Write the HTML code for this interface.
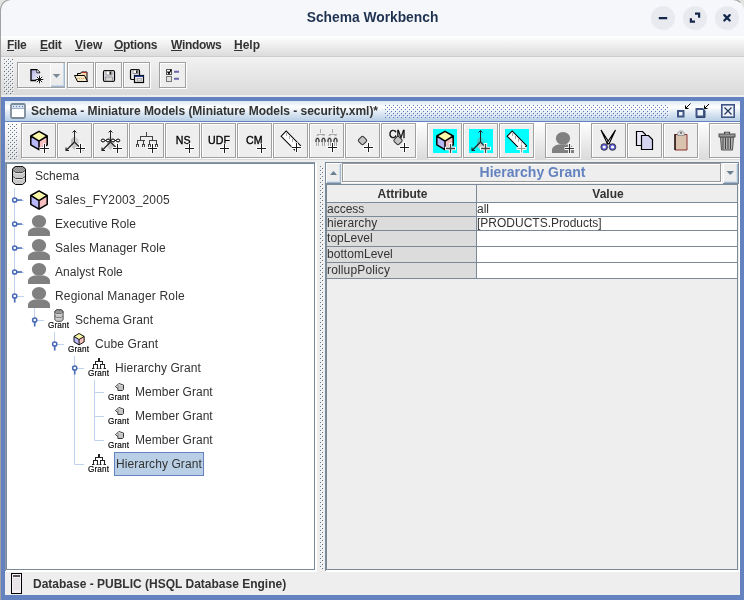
<!DOCTYPE html>
<html>
<head>
<meta charset="utf-8">
<title>Schema Workbench</title>
<style>
html,body{margin:0;padding:0;}
body{width:744px;height:600px;overflow:hidden;background:#e2e2e2;position:relative;font-family:"Liberation Sans",sans-serif;font-size:12px;color:#333;}
.abs{position:absolute;}
svg{display:block;overflow:visible;}
#oswin{position:absolute;left:0;top:0;width:744px;height:600px;background:#eee;will-change:transform;border-radius:11px 11px 0 0;overflow:hidden;}
#osborder{position:absolute;left:0;top:-1px;width:742px;height:620px;border:1px solid #a2a2a2;border-right-color:transparent;border-radius:11px 11px 0 0;pointer-events:none;}
#ostitle{position:absolute;left:0;top:0;width:744px;height:36px;background:#f6f7fb;}
#ostitle .t{position:absolute;left:0;width:745px;top:10px;text-align:center;font-weight:bold;font-size:13.8px;color:#1e3250;line-height:16px;}
.wbtn{position:absolute;top:6px;width:24px;height:24px;border-radius:12px;background:#e8eaf0;}
#topgrad{position:absolute;left:0;top:36px;width:744px;height:21px;background:linear-gradient(#fff,#dadada);}
#menubar{position:absolute;left:0;top:36px;width:744px;height:20px;border-bottom:1px solid #ccc;}
#menubar span{position:absolute;top:1px;font-weight:bold;font-size:12px;line-height:16px;color:#333;letter-spacing:-0.31px;}
#menubar u{text-decoration:underline;text-underline-offset:1px;}
.tbar{background:linear-gradient(#fff,#dadada);}
#tb1{position:absolute;left:1px;top:57px;width:743px;height:38px;background:linear-gradient(#f2f2f2,#dadada);}
.btn{position:absolute;box-sizing:border-box;border:1px solid #a0a0a0;box-shadow:inset 1px 1px 0 #fff, 1px 1px 0 #fff;background:#eee;}
.btn svg{position:absolute;left:-1px;top:-1px;}
#iframe{position:absolute;left:1px;top:97px;width:743px;height:503px;background:#6382bf;}
#ifin{position:absolute;left:4px;top:4px;width:735px;height:494px;background:#eee;overflow:hidden;}
#iftitle{position:absolute;left:0;top:0;width:735px;height:20px;background:linear-gradient(#dde8f3 0%,#fff 30%,#dde8f3 60%,#b8cfe5 100%);border-bottom:1px solid #6382bf;}
#iftitle .t{position:absolute;left:26px;top:2px;font-weight:bold;font-size:12px;line-height:16px;color:#333;white-space:pre;letter-spacing:-0.025px;}
#tb2{position:absolute;left:0;top:21px;width:735px;height:38px;background:linear-gradient(#fff,#dadada);}
#tree{position:absolute;left:1px;top:62px;width:309px;height:407px;background:#fff;border:1px solid #7a8a99;box-sizing:border-box;overflow:hidden;}
.tl{position:absolute;white-space:pre;font-size:12px;letter-spacing:0.2px;line-height:16px;color:#333;}
.gr{position:absolute;white-space:pre;font-size:8.2px;line-height:8px;color:#000;-webkit-text-stroke:0.15px #000;letter-spacing:0.12px;}
#right{position:absolute;left:320px;top:61px;width:414px;height:408px;background:#eee;}
#status{position:absolute;left:0;top:471px;width:735px;height:23px;background:#eee;}
.cell{position:absolute;white-space:pre;font-size:12px;color:#333;}
</style>
</head>
<body>

<svg width="0" height="0" style="position:absolute">
<defs>
<pattern id="bumpG" width="4" height="4" patternUnits="userSpaceOnUse"><rect x="0" y="0" width="1" height="1" fill="#60758e"/><rect x="1" y="1" width="1" height="1" fill="#fff"/><rect x="2" y="2" width="1" height="1" fill="#60758e"/><rect x="3" y="3" width="1" height="1" fill="#fff"/></pattern>
<pattern id="bumpB" width="4" height="4" patternUnits="userSpaceOnUse"><rect x="0" y="0" width="1" height="1" fill="#5878bd"/><rect x="1" y="1" width="1" height="1" fill="#fff"/><rect x="2" y="2" width="1" height="1" fill="#5878bd"/><rect x="3" y="3" width="1" height="1" fill="#fff"/></pattern>
<pattern id="dith" width="2" height="2" patternUnits="userSpaceOnUse"><rect x="0" y="0" width="1" height="1" fill="#888"/><rect x="1" y="1" width="1" height="1" fill="#888"/></pattern>
<linearGradient id="gdoc" x1="0" y1="0" x2="1" y2="1"><stop offset="0" stop-color="#a6a6e0"/><stop offset="1" stop-color="#fff"/></linearGradient>
<g id="plus"><path d="M-5 0h10M0 -5v10" stroke="#fff" stroke-width="3" fill="none"/><path d="M-4.500 0h9M0 -4.500v9" stroke="#1a1a1a" stroke-width="1" fill="none"/></g>
<g id="plusg"><path d="M-5.5 0h11M0 -5.5v11" stroke="#fff" stroke-width="3.4" fill="none"/><path d="M-4.5 0h9M0 -4.5v9" stroke="#444" stroke-width="1.3" fill="none"/></g>
<g id="cube"><path d="M9 0.8L17.2 5.5V14.3L9 19.2L0.8 14.3V5.5Z" fill="#f8f8a8"/><path d="M0.8 5.5L9 10.6V19.2L0.8 14.3Z" fill="#b8b8f8"/><path d="M17.2 5.5L9 10.6V19.2L17.2 14.3Z" fill="#f8c0c0"/><path d="M9 0.8L17.2 5.5V14.3L9 19.2L0.8 14.3V5.5ZM0.8 5.5L9 10.6L17.2 5.5M9 10.6V19.2" fill="none" stroke="#000" stroke-width="1.5" stroke-linejoin="round"/></g>
<g id="dim"><path d="M0 0L-3.500 3.500V8L0 11.500Z" fill="url(#dith)"/><path d="M0 0L4 3.500V8L0 5Z" fill="url(#dith)" opacity="0.600"/><path d="M0 6L4 10L0 14L-3 11Z" fill="#c8c8c8"/><path d="M0 -5.500V6M-2 -3.500L0 -5.500L2 -3.500" fill="none" stroke="#222" stroke-width="1"/><path d="M0 6L-8.500 14.500M-8.500 11.500V14.500H-5.500" fill="none" stroke="#222" stroke-width="1.150"/><path d="M0 6L5.500 11.500" fill="none" stroke="#222" stroke-width="1.150"/></g>
<g id="hier"><path d="M6.5 0V5M1.5 9V5H11.5V9" fill="none" stroke="#333" stroke-width="1"/></g>
<g id="person"><ellipse cx="11" cy="6.400" rx="7.100" ry="6.400" fill="#808080"/><path d="M0 21V18C0 15 3 13.200 6.500 12.400H15.500C19 13.200 22 15 22 18V21Z" fill="#808080"/></g>
<g id="hcoll"><path d="M2 0H7.500" stroke="#4d6fb8" stroke-width="1.700"/><circle cx="0.200" cy="0" r="2.100" fill="#fff" stroke="#4568b4" stroke-width="1.500"/></g>
<g id="hexp"><path d="M0.200 2V6.500" stroke="#4d6fb8" stroke-width="1.700"/><circle cx="0.200" cy="0" r="2.100" fill="#fff" stroke="#4568b4" stroke-width="1.500"/></g>
<g id="db"><path d="M3.5 0.5H10.5L13.5 3V16L10.5 18.5H3.5L0.5 16V3Z" fill="#c8c8c8" stroke="#000" stroke-width="1"/><path d="M3.5 0.5H10.5L13.5 3V4.5L10.5 6.5H3.5L0.5 4.5V3Z" fill="#a8a8a8"/><path d="M3.5 0.5H10.5L13.5 3V4.5L10.5 6.5H3.5L0.5 4.5V3Z" fill="url(#dith)" stroke="#000" stroke-width="0.8"/><path d="M0.5 10.5L3.5 12.5H10.5L13.5 10.5" fill="none" stroke="#000" stroke-width="0.9"/><path d="M1.2 5.5L3.7 7.3H10.3L12.8 5.5M1.2 11.5L3.7 13.3H10.3L12.8 11.5" fill="none" stroke="#f4f4f4" stroke-width="0.8"/></g>
</defs>
</svg>

<div id="oswin">
<div id="ostitle">
<div class="t">Schema Workbench</div>
<div class="wbtn" style="left:651px"><svg width="24" height="24" viewBox="0 0 24 24"><path d="M7.800 12.050h8.400" stroke="#14264a" stroke-width="2.300" fill="none"/></svg></div>
<div class="wbtn" style="left:683px"><svg width="24" height="24" viewBox="0 0 24 24"><path d="M12 7.700H16.100V11.800M7.900 12.200V15.700H12" stroke="#14264a" stroke-width="2.200" fill="none"/></svg></div>
<div class="wbtn" style="left:715px"><svg width="24" height="24" viewBox="0 0 24 24"><path d="M9.300 9.100l5.400 5.400M14.700 9.100l-5.400 5.400" stroke="#14264a" stroke-width="2.200" fill="none" stroke-linecap="round"/></svg></div>
</div>
<div id="topgrad"></div>
<div id="menubar">
<span style="left:7px"><u>F</u>ile</span>
<span style="left:40px"><u>E</u>dit</span>
<span style="left:75px;letter-spacing:0.05px"><u>V</u>iew</span>
<span style="left:114px"><u>O</u>ptions</span>
<span style="left:171px"><u>W</u>indows</span>
<span style="left:234px;letter-spacing:0px"><u>H</u>elp</span>
</div>
<div id="tb1">
<svg class="abs" style="left:3px;top:2px" width="10" height="35"><rect width="10" height="35" fill="url(#bumpG)"/></svg>
<div class="btn" style="left:16px;top:5px;width:48px;height:26px"><div class="abs" style="left:32px;top:0;width:14px;height:24px;background:linear-gradient(#f6f6f6,#e9e9e9);border-left:1px solid #fff;box-shadow:inset -1px -1px 0 #a3b8cc,inset -2px -2px 0 #c9d8e8;"></div>
<svg width="48" height="26" viewBox="0 0 48 26">
<path d="M13.500 7.500H20L23 10.500V18.500H13.500Z" fill="url(#gdoc)"/>
<path d="M19.500 18.500H14V7.600H19.800L23 10.800" fill="none" stroke="#000" stroke-width="1.300"/>
<path d="M19.800 7.600V10.800H23" fill="#fff" stroke="#000" stroke-width="0.800"/>
<circle cx="22.500" cy="17.500" r="3.200" fill="#fff" opacity="0.850"/>
<path d="M22.500 13.700v7.600M18.700 17.500h7.600M19.800 14.800l5.400 5.400M25.200 14.800l-5.400 5.400" stroke="#000" stroke-width="0.900" fill="none"/>
<path d="M35.700 12h7.600l-3.800 4.100z" fill="#7a8a99"/></svg></div>
<div class="btn" style="left:66px;top:5px;width:27px;height:26px"><svg width="27" height="26" viewBox="0 0 27 26">
<path d="M10.5 19.5v-8h3l1-1.5h5.5v9.5z" fill="#f3d9b0" stroke="#000" stroke-width="1"/>
<path d="M15 10.5h5" stroke="#b03030" stroke-width="1"/>
<path d="M7.5 13.5h10l3 6h-10z" fill="#f7e6c4" stroke="#000" stroke-width="1"/>
<path d="M10 16.5h8" stroke="#c9a36a" stroke-width="1" stroke-dasharray="1 1"/></svg></div>
<div class="btn" style="left:94px;top:5px;width:27px;height:26px"><svg width="27" height="26" viewBox="0 0 27 26">
<rect x="8.5" y="8.5" width="11" height="11" rx="1.5" fill="#e6e6ee" stroke="#000" stroke-width="1.2"/>
<rect x="11" y="9" width="6" height="4" fill="#fff" stroke="#555" stroke-width="0.6"/>
<rect x="14.5" y="9.5" width="1.8" height="3" fill="#222"/>
<rect x="10.5" y="15" width="7" height="4" fill="#d8d8d8" stroke="#666" stroke-width="0.6"/></svg></div>
<div class="btn" style="left:122px;top:5px;width:27px;height:26px"><svg width="27" height="26" viewBox="0 0 27 26">
<rect x="7.5" y="7.5" width="9" height="10" rx="1.2" fill="#e6e6ee" stroke="#000" stroke-width="1.2"/>
<rect x="10" y="8" width="5" height="3.4" fill="#fff" stroke="#555" stroke-width="0.6"/>
<rect x="13" y="8.4" width="1.6" height="2.6" fill="#222"/>
<rect x="11.5" y="13.5" width="9" height="7" fill="#eeeef4" stroke="#000" stroke-width="1.2"/>
<path d="M11.5 14.2h9" stroke="#223a8a" stroke-width="1.6"/>
<rect x="14" y="16.5" width="4.5" height="2.5" fill="#ddd" stroke="#777" stroke-width="0.5"/></svg></div>
<div class="btn" style="left:158px;top:5px;width:27px;height:26px"><svg width="27" height="26" viewBox="0 0 27 26">
<rect x="7.500" y="7.500" width="5" height="5" fill="#fff" stroke="#555" stroke-width="1"/>
<path d="M8.500 9.500l1.500 2 2.200-4" stroke="#000" stroke-width="1.300" fill="none"/>
<rect x="7.500" y="14.500" width="5" height="5" fill="#e4e4e4" stroke="#777" stroke-width="1"/>
<path d="M15 9.700h5M15 16.800h5" stroke="#6868a8" stroke-width="2"/></svg></div>
</div>

<div id="iframe">
<div id="ifin">
<div id="iftitle">
<svg class="abs" style="left:5px;top:2px" width="16" height="16"><rect x="1" y="1" width="14" height="14" rx="1.5" fill="#fff" stroke="#7a8a99" stroke-width="1.8"/><rect x="2" y="2" width="12" height="3" fill="#d4e2f1"/><path d="M3 3.500h1M6 3.500h1M9 3.500h1M12 3.500h1" stroke="#5878bd" stroke-width="1"/><path d="M2 5.500H14" stroke="#9fb0c2" stroke-width="1"/></svg>
<div class="t">Schema - Miniature Models (Miniature Models - security.xml)*</div>
<svg class="abs" style="left:380px;top:4px" width="288" height="14"><rect width="284" height="13" fill="url(#bumpB)"/></svg>
<svg class="abs" style="left:671px;top:1px" width="64" height="18" viewBox="676 102 64 18">
<rect x="678" y="111" width="5.500" height="5.500" fill="#eef3f9" stroke="#3f5685" stroke-width="2"/>
<path d="M690.500 103.500L685.500 108.500M685.500 105.500V108.500H688.500" fill="none" stroke="#000" stroke-width="1"/>
<rect x="696.500" y="109" width="7.500" height="7.500" fill="#eef3f9" stroke="#3f5685" stroke-width="2"/>
<path d="M696 117.500H705M705 117.500V110" stroke="#2f446e" stroke-width="1" fill="none"/>
<path d="M703 108H706V111Z" fill="#dde8f3"/>
<path d="M709 104L704.500 108.500M704.500 105.500V108.500H707.500" fill="none" stroke="#000" stroke-width="1"/>
<rect x="721.800" y="104.800" width="12.400" height="12.400" fill="#eef3f9" stroke="#3f5685" stroke-width="1.600"/>
<path d="M722 117.500H735M734.500 117.500V105" stroke="#3f5685" stroke-width="1" fill="none"/>
<path d="M724.500 107.500L731.500 114.500M731.500 107.500L724.500 114.500" stroke="#25365c" stroke-width="1.200"/>
</svg>
</div>

<div id="tb2">
<svg class="abs" style="left:3px;top:2px" width="10" height="35"><rect width="10" height="35" fill="url(#bumpG)"/></svg>
<div class="btn" style="left:16px;top:1px;width:35px;height:35px"><svg width="35" height="35" viewBox="0 0 35 35"><use href="#cube" x="9" y="7.5"/><use href="#plus" x="23.5" y="25.5"/></svg></div>
<div class="btn" style="left:52px;top:1px;width:35px;height:35px"><svg width="35" height="35" viewBox="0 0 35 35"><use href="#dim" x="17.5" y="13"/><rect x="25.6" y="26" width="1.4" height="1.4" fill="#555"/><use href="#plus" x="23.5" y="25.5"/></svg></div>
<div class="btn" style="left:88px;top:1px;width:35px;height:35px"><svg width="35" height="35" viewBox="0 0 35 35"><use href="#dim" x="17.5" y="13"/><path d="M8 17.5H27" stroke="#000" stroke-width="1"/><g fill="#fff" stroke="#000" stroke-width="1"><ellipse cx="10" cy="17.5" rx="1.8" ry="1.4"/><ellipse cx="15" cy="17.5" rx="1.8" ry="1.4"/><ellipse cx="20" cy="17.5" rx="1.8" ry="1.4"/><ellipse cx="25" cy="17.5" rx="1.8" ry="1.4"/></g><use href="#plus" x="24.5" y="25.5"/></svg></div>
<div class="btn" style="left:124px;top:1px;width:35px;height:35px"><svg width="35" height="35" viewBox="0 0 35 35"><path d="M17.500 9V14M11 13.500H24M11.500 13V18M23.500 13V18M8 17.500H16M20 17.500H28M8.500 17V22M14.500 17V22M20.500 17V22M27.500 17V22" fill="none" stroke="#444" stroke-width="1"/><path d="M7 21.500H10M13 21.500H16M19 21.500H22M26 21.500H29M7.500 21V24M9.500 21V24M13.500 21V24M15.500 21V24M19.500 21V24M21.500 21V24M26.500 21V24M28.500 21V24" fill="none" stroke="#444" stroke-width="1"/><use href="#plus" x="23.5" y="25.5"/></svg></div>
<div class="btn" style="left:160px;top:1px;width:35px;height:35px"><svg width="35" height="35" viewBox="0 0 35 35"><text x="18.2" y="20.5" font-family="Liberation Sans, sans-serif" font-size="10.6" fill="#000" stroke="#000" stroke-width="0.32" text-anchor="middle">NS</text><use href="#plus" x="24.5" y="25.5"/></svg></div>
<div class="btn" style="left:196px;top:1px;width:35px;height:35px"><svg width="35" height="35" viewBox="0 0 35 35"><text x="18" y="20.5" font-family="Liberation Sans, sans-serif" font-size="10.6" fill="#000" stroke="#000" stroke-width="0.32" text-anchor="middle">UDF</text><use href="#plus" x="23.5" y="25.5"/></svg></div>
<div class="btn" style="left:232px;top:1px;width:35px;height:35px"><svg width="35" height="35" viewBox="0 0 35 35"><text x="17.3" y="20.5" font-family="Liberation Sans, sans-serif" font-size="10.6" fill="#000" stroke="#000" stroke-width="0.32" text-anchor="middle">CM</text><use href="#plus" x="24.5" y="25.5"/></svg></div>
<div class="btn" style="left:268px;top:1px;width:35px;height:35px"><svg width="35" height="35" viewBox="0 0 35 35"><g transform="translate(10.65 10.6) rotate(45.3)"><rect x="0" y="-3.6" width="20.5" height="7.2" fill="#fff" stroke="#000" stroke-width="1"/></g><path d="M13.5 10v3M16.5 13v3M19.5 16v3M22.5 19v3" stroke="#aaa" stroke-width="1"/><use href="#plus" x="23.5" y="24.5"/></svg></div>
<div class="btn" style="left:304px;top:1px;width:35px;height:35px"><svg width="35" height="35" viewBox="0 0 35 35"><path d="M11.5 6.5v4" stroke="#666" stroke-width="1" stroke-dasharray="1 1"/><path d="M8.5 11.5h7" stroke="#666" stroke-width="1" stroke-dasharray="1 1"/><path d="M23.5 6.5v4" stroke="#666" stroke-width="1" stroke-dasharray="1 1"/><path d="M20.5 11.5h7" stroke="#666" stroke-width="1" stroke-dasharray="1 1"/><path d="M8.0 12v3M9.0 12v3" stroke="#888" stroke-width="0.6" stroke-dasharray="1 1"/><path d="M7.0 19V17.2Q7.0 15.5 8.5 15.5Q10.0 15.5 10.0 17.2V19" fill="none" stroke="#222" stroke-width="1.2"/><path d="M7.5 19.5v4M9.5 19.5v4" stroke="#666" stroke-width="1" stroke-dasharray="1 1"/><path d="M14.0 12v3M15.0 12v3" stroke="#888" stroke-width="0.6" stroke-dasharray="1 1"/><path d="M13.0 19V17.2Q13.0 15.5 14.5 15.5Q16.0 15.5 16.0 17.2V19" fill="none" stroke="#222" stroke-width="1.2"/><path d="M13.5 19.5v4M15.5 19.5v4" stroke="#666" stroke-width="1" stroke-dasharray="1 1"/><path d="M20.0 12v3M21.0 12v3" stroke="#888" stroke-width="0.6" stroke-dasharray="1 1"/><path d="M19.0 19V17.2Q19.0 15.5 20.5 15.5Q22.0 15.5 22.0 17.2V19" fill="none" stroke="#222" stroke-width="1.2"/><path d="M19.5 19.5v4M21.5 19.5v4" stroke="#666" stroke-width="1" stroke-dasharray="1 1"/><path d="M26.0 12v3M27.0 12v3" stroke="#888" stroke-width="0.6" stroke-dasharray="1 1"/><path d="M25.0 19V17.2Q25.0 15.5 26.5 15.5Q28.0 15.5 28.0 17.2V19" fill="none" stroke="#222" stroke-width="1.2"/><path d="M25.5 19.5v4M27.5 19.5v4" stroke="#666" stroke-width="1" stroke-dasharray="1 1"/><use href="#plus" x="23.5" y="24.5"/></svg></div>
<div class="btn" style="left:340px;top:1px;width:35px;height:35px"><svg width="35" height="35" viewBox="0 0 35 35"><g transform="translate(17.5 17.5) rotate(45)"><rect x="-2.9" y="-2.9" width="6.8" height="6.8" rx="1.6" fill="#fff"/><rect x="-3.4" y="-3.4" width="6.8" height="6.8" rx="1.6" fill="#c4c4c4" stroke="#333" stroke-width="1"/></g><use href="#plus" x="23.5" y="24.5"/></svg></div>
<div class="btn" style="left:376px;top:1px;width:35px;height:35px"><svg width="35" height="35" viewBox="0 0 35 35"><text x="16.2" y="14.7" font-family="Liberation Sans, sans-serif" font-size="10.6" fill="#000" stroke="#000" stroke-width="0.32" text-anchor="middle">CM</text><g transform="translate(17 17.5) rotate(45)"><rect x="-2.9" y="-2.9" width="6.8" height="6.8" rx="1.6" fill="#fff"/><rect x="-3.4" y="-3.4" width="6.8" height="6.8" rx="1.6" fill="#c4c4c4" stroke="#333" stroke-width="1"/></g><use href="#plus" x="23.5" y="24.5"/></svg></div>
<div class="btn" style="left:422px;top:1px;width:35px;height:35px"><svg width="35" height="35" viewBox="0 0 35 35"><rect x="6" y="6" width="24" height="24" fill="#00ffff"/><use href="#cube" x="9" y="7.5"/><path d="M1 0V12" transform="translate(9 7.5)" stroke="none"/><use href="#plusg" x="23.5" y="25.5"/></svg></div>
<div class="btn" style="left:458px;top:1px;width:35px;height:35px"><svg width="35" height="35" viewBox="0 0 35 35"><rect x="6" y="6" width="24" height="24" fill="#00ffff"/><use href="#dim" x="17.5" y="13"/><use href="#plusg" x="22.5" y="25.5"/></svg></div>
<div class="btn" style="left:494px;top:1px;width:35px;height:35px"><svg width="35" height="35" viewBox="0 0 35 35"><rect x="6" y="6" width="24" height="24" fill="#00ffff"/><g transform="translate(10.65 10.6) rotate(45.3)"><rect x="0" y="-3.6" width="20.5" height="7.2" fill="#fff" stroke="#000" stroke-width="1"/></g><path d="M13.5 10v3M16.5 13v3M19.5 16v3M22.5 19v3" stroke="#aaa" stroke-width="1"/><path d="M17.500 25.500h10M22.500 20.500v10" stroke="#fff" stroke-width="3.2"/><path d="M18.500 25.500h8M22.500 21.500v8" stroke="#999" stroke-width="1.2"/></svg></div>
<div class="btn" style="left:540px;top:1px;width:35px;height:35px"><svg width="35" height="35" viewBox="0 0 35 35"><use href="#person" x="7" y="9"/><path d="M19.500 25.500h10M24.500 20.500v10" stroke="#fff" stroke-width="3"/><path d="M20 25.500h9M24.500 21v9" stroke="#333" stroke-width="1.200"/></svg></div>
<div class="btn" style="left:586px;top:1px;width:35px;height:35px"><svg width="35" height="35" viewBox="0 0 35 35"><path d="M10 7L18.500 20L16.500 21Z" fill="#fff" stroke="#000" stroke-width="1.150"/><path d="M24.500 7L16 20L18 21Z" fill="#fff" stroke="#000" stroke-width="1.150"/><circle cx="13.2" cy="24" r="2.4" fill="#fff" stroke="#5a5ad0" stroke-width="1.6"/><circle cx="21.5" cy="24" r="2.4" fill="#fff" stroke="#5a5ad0" stroke-width="1.6"/><circle cx="13.2" cy="24" r="3.4" fill="none" stroke="#000" stroke-width="0.6"/><circle cx="21.5" cy="24" r="3.4" fill="none" stroke="#000" stroke-width="0.6"/></svg></div>
<div class="btn" style="left:622px;top:1px;width:35px;height:35px"><svg width="35" height="35" viewBox="0 0 35 35"><path d="M9.5 8.5H15.5L18.5 11.5V22.5H9.5Z" fill="#e8e8f8" stroke="#000" stroke-width="1.2"/><path d="M14.5 12.5H21.5L25.5 16.5V26.5H14.5Z" fill="#d4d4f0" stroke="#000" stroke-width="1.2"/></svg></div>
<div class="btn" style="left:658px;top:1px;width:35px;height:35px"><svg width="35" height="35" viewBox="0 0 35 35"><path d="M12 11.5H24V27H12Z" fill="#d9c3ae" stroke="#8a3030" stroke-width="1"/><path d="M12 11V27" stroke="#000" stroke-width="1.2"/><path d="M14.5 12.5Q14.500 8 18 8Q21.5 8 21.5 12.500Z" fill="#ddd" stroke="#888" stroke-width="0.8"/><circle cx="18" cy="10" r="0.9" fill="#555"/></svg></div>
<div class="btn" style="left:704px;top:1px;width:35px;height:35px"><svg width="35" height="35" viewBox="0 0 35 35"><path d="M11.500 14H24.500L23.500 27H12.500Z" fill="#b0b0b0" stroke="#555" stroke-width="1"/><path d="M14 15v11M16.500 15v11M19 15v11M21.500 15v11" stroke="#444" stroke-width="1"/><rect x="10" y="11" width="16" height="3" fill="#999" stroke="#444" stroke-width="0.9"/><path d="M15.500 11V9.200H20.500V11" fill="none" stroke="#444" stroke-width="1.1"/></svg></div>
</div>

<div id="tree">
<svg class="abs" style="left:0;top:0" width="307" height="405" viewBox="7 164 307 405">
<g stroke="#c0d2ee" stroke-width="1" fill="none"><path d="M14.500 188V296"/><path d="M14.500 200.5H24"/><path d="M14.500 224.5H24"/><path d="M14.500 248.5H24"/><path d="M14.500 272.5H24"/><path d="M14.500 296.5H24"/><path d="M34.500 308V320M34.500 320.500H44"/><path d="M54.500 332V344M54.500 344.500H64"/><path d="M74.500 356V464.500H84M74.500 368.500H84"/><path d="M94.500 380V440.500H104M94.500 392.500H104M94.500 416.500H104"/></g>
<use href="#hcoll" x="14.500" y="200"/><use href="#hcoll" x="14.500" y="224"/><use href="#hcoll" x="14.500" y="248"/><use href="#hcoll" x="14.500" y="272"/><use href="#hexp" x="14.500" y="296"/><use href="#hexp" x="34.500" y="320"/><use href="#hexp" x="54.500" y="344"/><use href="#hexp" x="74.500" y="368"/>
<use href="#db" x="12" y="166"/><use href="#cube" x="30" y="190"/><use href="#person" x="28" y="215"/><use href="#person" x="28" y="239"/><use href="#person" x="28" y="263"/><use href="#person" x="28" y="287"/><g transform="translate(54.5 309.500) scale(0.64)"><use href="#db"/></g><g transform="translate(73.5 333) scale(0.62)"><use href="#cube"/></g><g transform="translate(92 358)"><rect x="6" y="0" width="2" height="3" fill="#222"/><path d="M3 3.500H11M3.500 3V7M10.500 3V7M1 6.500H6M8 6.500H13M1.500 6V10.500M5.500 6V10.500M8.500 6V10.500M12.500 6V10.500" fill="none" stroke="#222" stroke-width="1"/><path d="M0 10.500H2.500M4.500 10.500H6.500M7.500 10.500H9.500M11.500 10.500H14" stroke="#222" stroke-width="1"/></g><g transform="translate(92 454)"><rect x="6" y="0" width="2" height="3" fill="#222"/><path d="M3 3.500H11M3.500 3V7M10.500 3V7M1 6.500H6M8 6.500H13M1.500 6V10.500M5.500 6V10.500M8.500 6V10.500M12.500 6V10.500" fill="none" stroke="#222" stroke-width="1"/><path d="M0 10.500H2.500M4.500 10.500H6.500M7.500 10.500H9.500M11.500 10.500H14" stroke="#222" stroke-width="1"/></g><g transform="translate(115 383)"><path d="M0.500 3.800L3.800 0.500L8.500 2V6.500L7.500 7.500H3V5.500Z" fill="#fff" stroke="#222" stroke-width="0.900" stroke-linejoin="round"/><rect x="3.300" y="2.300" width="4.700" height="4.700" fill="#c4c4c4"/><path d="M3 2V7.500" stroke="#555" stroke-width="0.700"/></g><g transform="translate(115 407)"><path d="M0.500 3.800L3.800 0.500L8.500 2V6.500L7.500 7.500H3V5.500Z" fill="#fff" stroke="#222" stroke-width="0.900" stroke-linejoin="round"/><rect x="3.300" y="2.300" width="4.700" height="4.700" fill="#c4c4c4"/><path d="M3 2V7.500" stroke="#555" stroke-width="0.700"/></g><g transform="translate(115 431)"><path d="M0.500 3.800L3.800 0.500L8.500 2V6.500L7.500 7.500H3V5.500Z" fill="#fff" stroke="#222" stroke-width="0.900" stroke-linejoin="round"/><rect x="3.300" y="2.300" width="4.700" height="4.700" fill="#c4c4c4"/><path d="M3 2V7.500" stroke="#555" stroke-width="0.700"/></g></svg>
<div class="tl" style="left:28px;top:4px;letter-spacing:0.045px">Schema</div>
<div class="tl" style="left:48px;top:28px;letter-spacing:0.16px">Sales_FY2003_2005</div>
<div class="tl" style="left:48px;top:52px;letter-spacing:0.07px">Executive Role</div>
<div class="tl" style="left:48px;top:76px;letter-spacing:0.115px">Sales Manager Role</div>
<div class="tl" style="left:48px;top:100px;letter-spacing:0.035px">Analyst Role</div>
<div class="tl" style="left:48px;top:124px;letter-spacing:0.18px">Regional Manager Role</div>
<div class="tl" style="left:68px;top:148px;letter-spacing:0.07px">Schema Grant</div>
<div class="tl" style="left:88px;top:172px;letter-spacing:0.115px">Cube Grant</div>
<div class="tl" style="left:108px;top:196px;letter-spacing:0.073px">Hierarchy Grant</div>
<div class="tl" style="left:128px;top:220px;letter-spacing:0.03px">Member Grant</div>
<div class="tl" style="left:128px;top:244px;letter-spacing:0.03px">Member Grant</div>
<div class="tl" style="left:128px;top:268px;letter-spacing:0.03px">Member Grant</div>
<div class="abs" style="left:107px;top:288px;width:90px;height:24px;box-sizing:border-box;background:#b8cfe5;border:1px solid #6382bf"></div>
<div class="tl" style="left:109px;top:292px;letter-spacing:0.073px">Hierarchy Grant</div>
<div class="gr" style="left:41px;top:158px">Grant</div>
<div class="gr" style="left:61px;top:182px">Grant</div>
<div class="gr" style="left:81px;top:206px">Grant</div>
<div class="gr" style="left:101px;top:230px">Grant</div>
<div class="gr" style="left:101px;top:254px">Grant</div>
<div class="gr" style="left:101px;top:278px">Grant</div>
<div class="gr" style="left:81px;top:302px">Grant</div>
</div>

<div class="abs" style="left:310px;top:62px;width:2px;height:409px;background:#fff"></div>
<div class="abs" style="left:1px;top:469px;width:311px;height:2px;background:#fff"></div>
<div class="abs" style="left:320px;top:469px;width:415px;height:2px;background:#fff"></div>
<div class="abs" style="left:734px;top:61px;width:1px;height:410px;background:#fff"></div>
<div class="abs" style="left:0px;top:61px;width:310px;height:1px;background:#8898a8"></div>
<div class="abs" style="left:0px;top:61px;width:1px;height:409px;background:#8898a8"></div>
<svg class="abs" style="left:315px;top:65px" width="4" height="404"><rect width="4" height="404" fill="url(#bumpG)"/></svg>

<div id="right">
<div class="abs" style="left:0;top:0;width:414px;height:1px;background:#7a8a99"></div><div class="abs" style="left:0;top:0;width:1px;height:409px;background:#7a8a99"></div><div class="abs" style="left:413px;top:0;width:1px;height:22px;background:#7a8a99"></div><div class="abs" style="left:398px;top:21px;width:16px;height:1px;background:#7a8a99"></div><div class="abs" style="left:0px;top:21px;width:16px;height:1px;background:#7a8a99"></div>
<div class="abs" style="left:1px;top:1px;width:15px;height:20px;box-sizing:border-box;background:#eee;box-shadow:inset 1px 1px 0 #fff,inset -1px -1px 0 #a3b8cc,inset -2px -2px 0 #d3e0ee"><svg width="15" height="20"><path d="M4 12H11L7.500 8Z" fill="#6b7f93"/></svg></div>
<div class="abs" style="left:17px;top:1px;width:379px;height:19px;box-sizing:border-box;border:1px solid #9a9a9a;box-shadow:inset 1px 1px 0 #fff,1px 1px 0 #fff;background:#eee;text-align:center;font-weight:bold;font-size:14px;line-height:17px;color:#6382bf;text-indent:2px">Hierarchy Grant</div>
<div class="abs" style="left:398px;top:1px;width:15px;height:20px;box-sizing:border-box;background:#eee;box-shadow:inset 1px 1px 0 #fff,inset -1px -1px 0 #a3b8cc,inset -2px -2px 0 #d3e0ee"><svg width="15" height="20"><path d="M3.500 8H11L7.250 12Z" fill="#6b7f93"/></svg></div>
<div class="abs" style="left:1px;top:22px;width:412px;height:386px;box-sizing:border-box;border:1px solid #7a8a99;background:#eee"></div>
<div class="abs" style="left:2px;top:40px;width:410px;height:1px;background:#7a8a99"></div>
<div class="abs" style="left:2px;top:41px;width:149px;height:13px;background:#dcdcdc"></div><div class="abs" style="left:152px;top:41px;width:260px;height:13px;background:#fff"></div>
<div class="cell" style="left:2px;top:40px;line-height:14px;letter-spacing:0px">access</div><div class="cell" style="left:152px;top:40px;line-height:14px">all</div><div class="abs" style="left:2px;top:54px;width:410px;height:1px;background:#7a8a99"></div>
<div class="abs" style="left:2px;top:55px;width:149px;height:13px;background:#dcdcdc"></div><div class="abs" style="left:152px;top:55px;width:260px;height:13px;background:#fff"></div>
<div class="cell" style="left:2px;top:54px;line-height:14px;letter-spacing:0.1px">hierarchy</div><div class="cell" style="left:152px;top:54px;line-height:14px">[PRODUCTS.Products]</div><div class="abs" style="left:2px;top:68px;width:410px;height:1px;background:#7a8a99"></div>
<div class="abs" style="left:2px;top:69px;width:149px;height:15px;background:#dcdcdc"></div><div class="abs" style="left:152px;top:69px;width:260px;height:15px;background:#fff"></div>
<div class="cell" style="left:2px;top:69px;line-height:14px;letter-spacing:0.05px">topLevel</div><div class="abs" style="left:2px;top:84px;width:410px;height:1px;background:#7a8a99"></div>
<div class="abs" style="left:2px;top:85px;width:149px;height:15px;background:#dcdcdc"></div><div class="abs" style="left:152px;top:85px;width:260px;height:15px;background:#fff"></div>
<div class="cell" style="left:2px;top:85px;line-height:14px;letter-spacing:0.04px">bottomLevel</div><div class="abs" style="left:2px;top:100px;width:410px;height:1px;background:#7a8a99"></div>
<div class="abs" style="left:2px;top:101px;width:149px;height:15px;background:#dcdcdc"></div><div class="abs" style="left:152px;top:101px;width:260px;height:15px;background:#fff"></div>
<div class="cell" style="left:2px;top:101px;line-height:14px;letter-spacing:0.15px">rollupPolicy</div><div class="abs" style="left:2px;top:116px;width:410px;height:1px;background:#7a8a99"></div>
<div class="abs" style="left:151px;top:23px;width:1px;height:94px;background:#7a8a99"></div>
<div class="abs" style="left:3px;top:25px;width:149px;text-align:center;font-weight:bold;line-height:14px">Attribute</div><div class="abs" style="left:153px;top:25px;width:260px;text-align:center;font-weight:bold;line-height:14px">Value</div>
</div>

<div id="status"><svg class="abs" style="left:6px;top:1px" width="12" height="21"><rect x="0.5" y="0.5" width="10" height="20" fill="#f4f0f4" stroke="#000" stroke-width="1"/><rect x="2" y="2" width="7" height="2" fill="#555"/><path d="M2 6h7M2 8h7M2 10h7M2 12h7M2 14h7M2 16h7" stroke="#ccc" stroke-width="0.6"/></svg><div class="abs" style="left:28px;top:4px;font-weight:bold;line-height:16px;white-space:pre">Database - PUBLIC (HSQL Database Engine)</div></div>

</div>
</div>
</div>
<div id="osborder"></div>
</body>
</html>
